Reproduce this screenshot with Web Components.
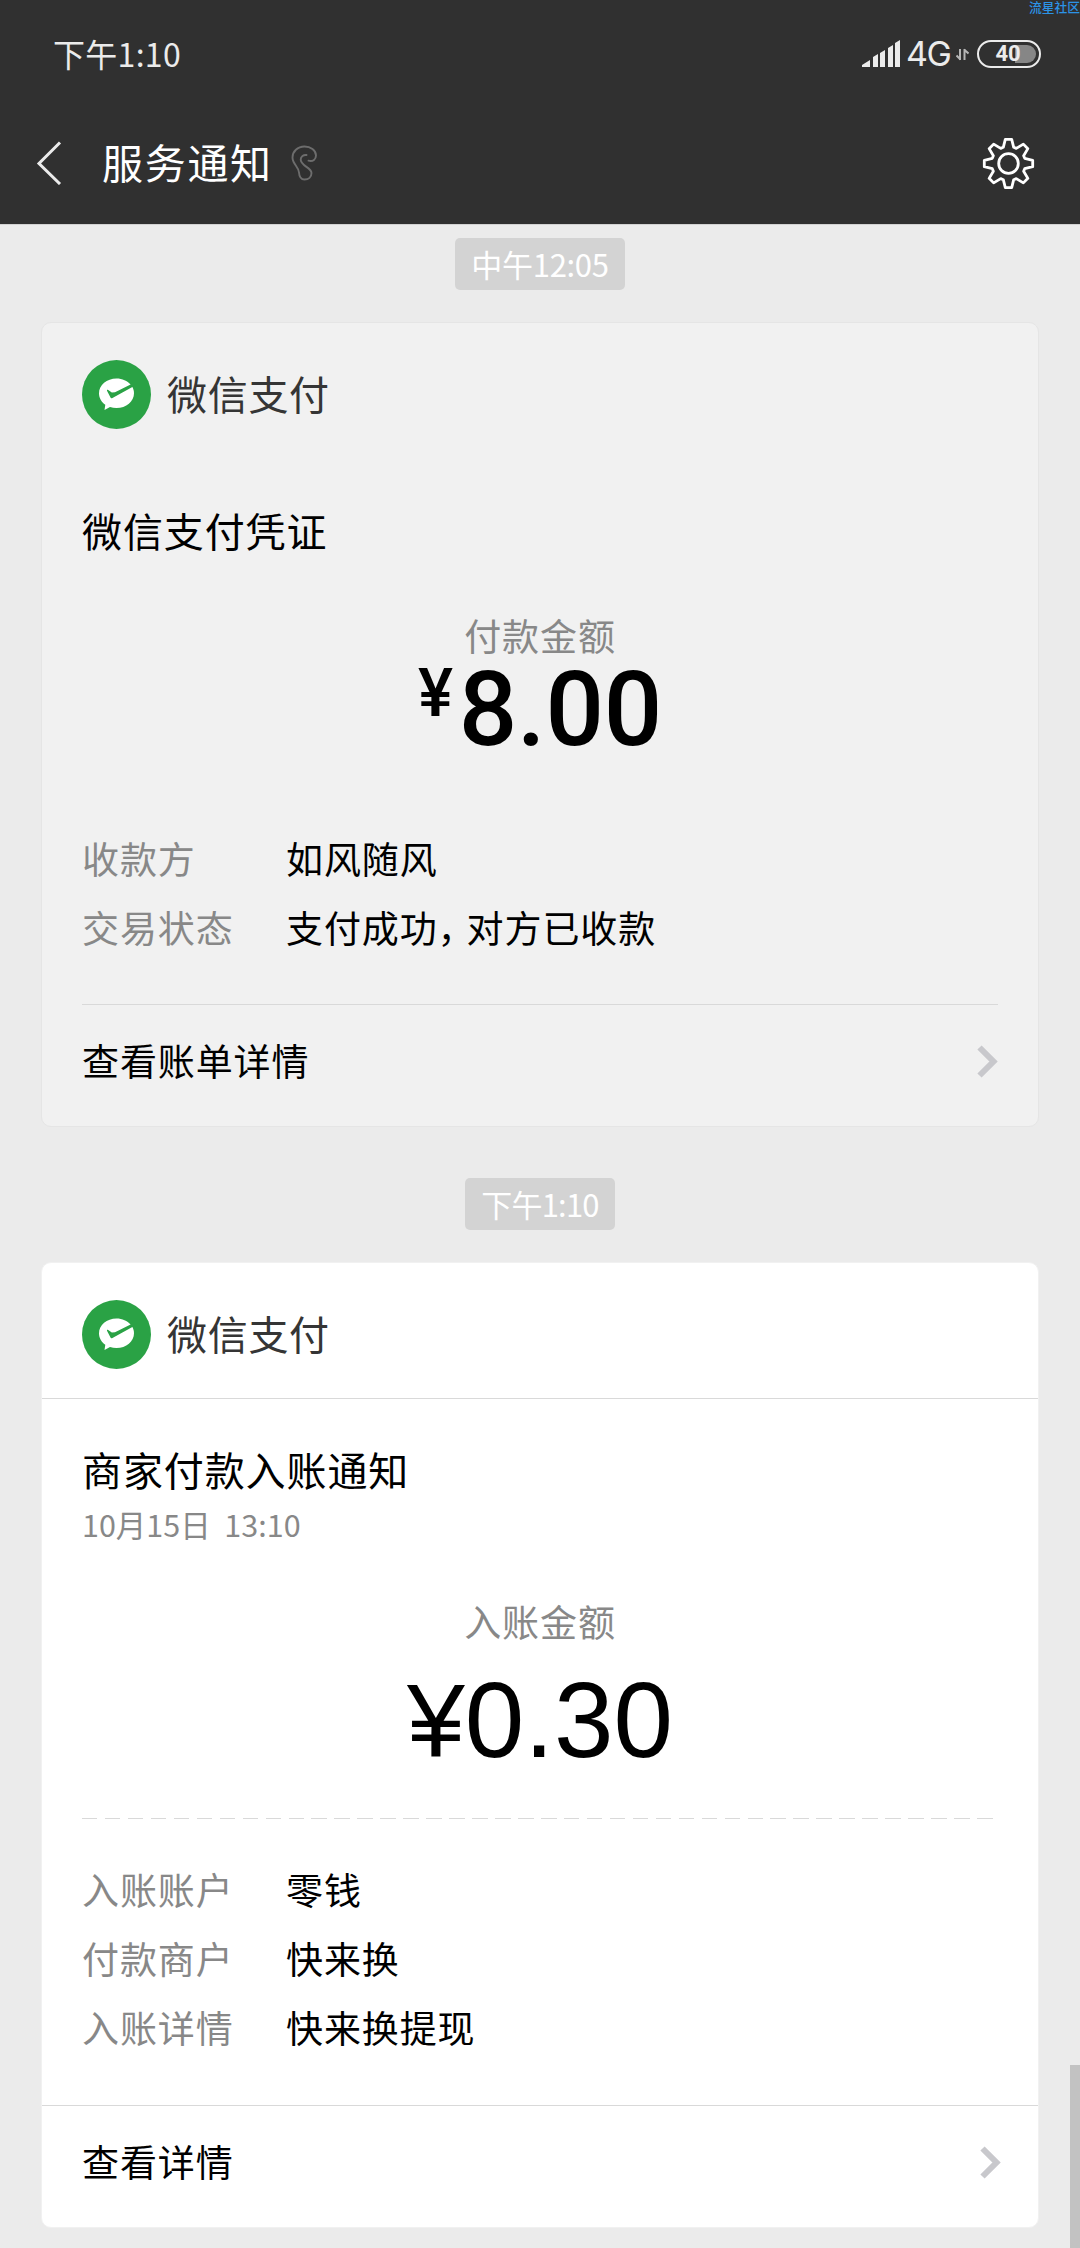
<!DOCTYPE html>
<html lang="zh-CN">
<head>
<meta charset="utf-8">
<title>服务通知</title>
<style>
  html, body {
    margin: 0;
    background: #ebebeb;
  }
  body {
    width: 1080px;
    height: 2248px;
    overflow: hidden;
    font-family: "Noto Sans CJK SC", sans-serif;
    color: #000;
  }
</style>
</head>
<body>
<notice-screen></notice-screen>

<script>
/** <status-bar> : heure, réseau, batterie */
class StatusBar extends HTMLElement {
    constructor() {
        super();
        this.attachShadow({ mode: 'open' });
    }

    connectedCallback() {
        this.shadowRoot.innerHTML = `
      <style>
        :host {
          display: flex;
          align-items: center;
          justify-content: space-between;
          box-sizing: border-box;
          height: 107px;
          padding: 0 39px 0 53px;
          color: #ebebeb;
        }
        .time { font-size: 32px; line-height: 40px; letter-spacing: 0.3px; padding-bottom: 2px; }
        .right { display: flex; align-items: center; }
        svg { display: block; }
        .net {
          font-family: Inter, sans-serif;
          font-size: 34px;
          font-weight: 400;
          line-height: 40px;
          width: 50px;
          margin-left: 5px;
          letter-spacing: -1.5px;
        }
        .battery {
          display: flex;
          align-items: center;
          justify-content: center;
          box-sizing: border-box;
          width: 64px;
          height: 28px;
          margin-left: 8px;
          border: 2.5px solid #ebebeb;
          border-radius: 14px;
          padding: 3px;
          font: 700 22px/18px Roboto, sans-serif;
        }
        .level {
          width: 100%;
          height: 18px;
          border-radius: 9px;
          text-align: center;
          text-indent: -2px;
          background: linear-gradient(90deg, transparent 62%, #868686 62%);
        }
        .mark {
          position: absolute;
          top: -1px;
          left: 1029px;
          font-size: 12.75px;
          font-weight: 500;
          line-height: 15px;
          color: #2c93e6;
          white-space: nowrap;
        }
      </style>
      <span class="time">${this.getAttribute('time')}</span>
      <div class="right">
        <svg width="39" height="28" viewBox="0 0 39 28" fill="#ebebeb">
          <path d="M0 27v-2l8-5v7zM11 27V17l5-3v13zM18 27V13l5-3v17zM26 27V8l5-3v22zM33 27V3l5-3v27z"/>
        </svg>
        <span class="net">4G</span>
        <svg width="13" height="14" viewBox="0 0 13 14" fill="none" stroke="#b5b5b5" stroke-width="2">
          <path d="M4 2v11M4.5 12.5L.5 8.5M8.500 13V2M8 2.500l4.500 4"/>
        </svg>
        <div class="battery"><span class="level">40</span></div>
      </div>
      <span class="mark">流星社区</span>
    `;
    }
}

/** <nav-bar> : retour, titre, réglages */
class NavBar extends HTMLElement {
    constructor() {
        super();
        this.attachShadow({ mode: 'open' });
    }

    connectedCallback() {
        this.shadowRoot.innerHTML = `
      <style>
        :host {
          display: flex;
          align-items: center;
          box-sizing: border-box;
          height: 112px;
          margin-bottom: 5px;
          padding: 0 45px 0 36px;
          color: #fff;
        }
        svg { display: block; flex: none; }
        .title {
          font-size: 41px;
          line-height: 60px;
          letter-spacing: 1.7px;
          margin: 0 18px 0 40px;
          padding-bottom: 4px;
        }
        .gear { margin-left: auto; }
      </style>
      <svg width="26" height="44" viewBox="0 0 26 44" fill="none" stroke="#ebebeb" stroke-width="3">
        <path d="M24 1.500L3 22.500l21 20.500"/>
      </svg>
      <span class="title"><slot></slot></span>
      <svg width="27" height="36" viewBox="0 0 27 36" fill="none" stroke="#6d6d6d" stroke-width="1.900" stroke-linecap="round">
        <path d="M17.500 15.700C22 17 25 14 25 10.500C25 5 19.500 1.500 13.500 1.500C6.500 1.500 1.500 6.500 1.500 12.500C1.500 19 7.500 21.500 8 27.500C8.300 32 9.500 34.500 13.500 34.500C17.500 34.500 20.500 32 20.500 28C20.500 22.500 9.700 21 9.700 14.500C9.700 11.500 12.500 9.600 15.500 10"/>
      </svg>
      <svg class="gear" width="53" height="53" viewBox="-26.500 -26.500 53 53" fill="none" stroke="#fff" stroke-width="2.800" stroke-linejoin="round">
        <circle r="9.800"/>
        <path id="teeth"/>
      </svg>
    `;
        this.shadowRoot.querySelector('#teeth').setAttribute('d', this.gearPath());
    }

    // Huit dents, une tous les 45°
    gearPath() {
        const tooth = [[-5.2, -16.2], [-3.2, -24.2], [3.2, -24.2], [5.2, -16.2]];
        let d = '';
        for (let i = 0; i < 8; i++) {
            const a = i * Math.PI / 4;
            const p = tooth.map(([x, y]) => [
                (x * Math.cos(a) - y * Math.sin(a)).toFixed(2),
                (x * Math.sin(a) + y * Math.cos(a)).toFixed(2)
            ].join(' '));
            d += (i ? 'L' : 'M') + p.join('L');
        }
        return d + 'Z';
    }
}

/** <time-pill> : séparateur horaire */
class TimePill extends HTMLElement {
    constructor() {
        super();
        this.attachShadow({ mode: 'open' });
        this.shadowRoot.innerHTML = `
      <style>
        :host {
          display: block;
          box-sizing: border-box;
          width: fit-content;
          height: 52px;
          margin: 0 auto;
          padding: 0 16px;
          border-radius: 5px;
          background: #d3d3d3;
          color: #fff;
          font-size: 31px;
          line-height: 51px;
          letter-spacing: -0.3px;
          white-space: nowrap;
        }
      </style>
      <slot></slot>
    `;
    }
}

/** <info-row label="..."> : libellé gris + valeur */
class InfoRow extends HTMLElement {
    constructor() {
        super();
        this.attachShadow({ mode: 'open' });
    }

    connectedCallback() {
        this.shadowRoot.innerHTML = `
      <style>
        :host {
          display: grid;
          grid-template-columns: 204px 1fr;
          height: 69px;
          font-size: 37px;
          line-height: 67px;
          letter-spacing: 0.9px;
        }
        .label { color: #888; }
      </style>
      <span class="label">${this.getAttribute('label')}</span>
      <span><slot></slot></span>
    `;
    }
}

/** <pay-card> : carte de notification, attribut "read" pour la version grisée */
class PayCard extends HTMLElement {
    constructor() {
        super();
        this.attachShadow({ mode: 'open' });
    }

    connectedCallback() {
        this.shadowRoot.innerHTML = `
      <style>
        :host {
          display: block;
          box-sizing: border-box;
          width: 998px;
          margin: 0 auto;
          border: 1px solid #f1f1f1;
          border-radius: 10px;
          background: #fff;
          --line: #d9d9d9;
        }
        :host([read]) {
          background: #f1f1f1;
          border-color: #e5e5e5;
        }
        header {
          display: flex;
          align-items: flex-start;
          box-sizing: border-box;
          height: 136px;
          padding: 37px 40px 0;
          border-bottom: 1px solid var(--line);
        }
        :host([read]) header { border-color: transparent; }
        header span {
          margin-left: 16px;
          font-size: 40px;
          line-height: 67px;
          letter-spacing: 0.7px;
          color: #353535;
        }
        .body { padding: 0 40px; }
        .footer {
          display: flex;
          align-items: center;
          justify-content: space-between;
          box-sizing: border-box;
          height: 122px;
          padding: 0 37px 8px 40px;
          border-top: 1px solid var(--line);
          font-size: 37px;
          letter-spacing: 0.9px;
        }
        :host([read]) .footer {
          margin: 0 40px;
          padding: 0 0 8px;
        }
        .action { padding-bottom: 4px; }
        svg { display: block; }
      </style>
      <header>
        <svg width="69" height="69" viewBox="0 0 69 69">
          <circle cx="34.500" cy="34.500" r="34.500" fill="#2aa245"/>
          <path fill="#fff" d="M34.500 18.500C24.800 18.500 17 25 17 33.200C17 37.900 19.500 42 23.300 44.700L22.500 50L28 46.900C30 47.600 32.200 48 34.500 48C44.200 48 52 41.500 52 33.200C52 31 51.400 28.900 50.400 27L30 38.200C29.300 38.500 28.800 38.300 28.500 37.600L25 30.800C24.700 30 25.500 29.500 26.200 30L29.800 32.600L33 32.200L48.600 24.500C45.400 20.900 40.300 18.500 34.500 18.500Z"/>
        </svg>
        <span>微信支付</span>
      </header>
      <div class="body"><slot></slot></div>
      <div class="footer">
        <span class="action"><slot name="action"></slot></span>
        <svg width="21" height="33" viewBox="0 0 21 33" fill="none" stroke="#c8c8cc" stroke-width="6">
          <path d="M2.500 2.500L16.500 16.500L2.500 30.500"/>
        </svg>
      </div>
    `;
    }
}

/** <pay-amount label="..." value="..."> : libellé centré et montant */
class PayAmount extends HTMLElement {
    constructor() {
        super();
        this.attachShadow({ mode: 'open' });
    }

    connectedCallback() {
        this.shadowRoot.innerHTML = `
      <style>
        :host {
          display: flex;
          flex-direction: column;
          align-items: center;
        }
        .label {
          font-size: 37px;
          line-height: 48px;
          height: 50px;
          letter-spacing: 0.9px;
          color: #888;
        }
        .amount {
          display: flex;
          height: 92px;
          margin-top: 27px;
          font: 107px/92px "Liberation Sans", sans-serif;
        }
        .cur { font-size: 104px; margin-right: 0; }
        :host([small]) .amount {
          margin-top: 0;
          font: 500 103px/97px Roboto, sans-serif;
          letter-spacing: -0.3px;
        }
        :host([small]) .cur {
          font-size: 66px;
          line-height: 66px;
          margin-right: 6px;
        }
      </style>
      <span class="label">${this.getAttribute('label')}</span>
      <div class="amount"><span class="cur">¥</span><span>${this.getAttribute('value')}</span></div>
    `;
    }
}

/** <notice-screen> : l'écran complet */
class NoticeScreen extends HTMLElement {
    constructor() {
        super();
        this.attachShadow({ mode: 'open' });
    }

    connectedCallback() {
        this.shadowRoot.innerHTML = `
      <style>
        :host {
          display: block;
          position: relative;
          width: 1080px;
          height: 2248px;
          overflow: hidden;
          background: #ebebeb;
        }
        .top { background: #303030; height: 224px; }
        .feed {
          display: flex;
          flex-direction: column;
          box-sizing: border-box;
          padding-top: 13px;
          border-top: 1px solid #d2d2d2;
        }
        pay-card { margin-top: 32px; }
        pay-card[read] { margin-bottom: 51px; }
        h2 {
          height: 60px;
          margin: 42px 0 0;
          font-size: 40px;
          font-weight: 400;
          line-height: 57px;
          letter-spacing: 0.9px;
        }
        .date {
          height: 40px;
          margin-top: 4px;
          font-size: 30.5px;
          line-height: 38px;
          color: #888;
          white-space: pre;
        }
        .dash {
          width: 911px;
          height: 1px;
          margin: 52px 0 37px;
          background: repeating-linear-gradient(90deg, #d9d9d9 0 15.5px, transparent 15.5px 22.95px);
        }
        .gap { height: 42px; }
        .comma { letter-spacing: -8px; }
        .scroll {
          position: absolute;
          right: 0;
          bottom: 0;
          width: 10px;
          height: 183px;
          background: #c2c2c2;
        }
      </style>
      <div class="top">
        <status-bar time="下午1:10"></status-bar>
        <nav-bar>服务通知</nav-bar>
      </div>
      <div class="feed">
        <time-pill>中午12:05</time-pill>
        <pay-card read>
          <h2 style="margin-top:43px">微信支付凭证</h2>
          <pay-amount small label="付款金额" value="8.00" style="margin:49px 0 72px"></pay-amount>
          <info-row label="收款方">如风随风</info-row>
          <info-row label="交易状态">支付成功<span class="comma">，</span>对方已收款</info-row>
          <div class="gap" style="height:41px"></div>
          <span slot="action">查看账单详情</span>
        </pay-card>

        <time-pill style="letter-spacing:-0.8px">下午1:10</time-pill>
        <pay-card>
          <h2>商家付款入账通知</h2>
          <div class="date">10月15日  13:10</div>
          <pay-amount label="入账金额" value="0.30" style="margin-top:52px"></pay-amount>
          <div class="dash"></div>
          <info-row label="入账账户">零钱</info-row>
          <info-row label="付款商户">快来换</info-row>
          <info-row label="入账详情">快来换提现</info-row>
          <div class="gap"></div>
          <span slot="action">查看详情</span>
        </pay-card>
      </div>
      <div class="scroll"></div>
    `;
    }
}

customElements.define('status-bar', StatusBar);
customElements.define('nav-bar', NavBar);
customElements.define('time-pill', TimePill);
customElements.define('info-row', InfoRow);
customElements.define('pay-card', PayCard);
customElements.define('pay-amount', PayAmount);
customElements.define('notice-screen', NoticeScreen);
</script>
</body>
</html>
